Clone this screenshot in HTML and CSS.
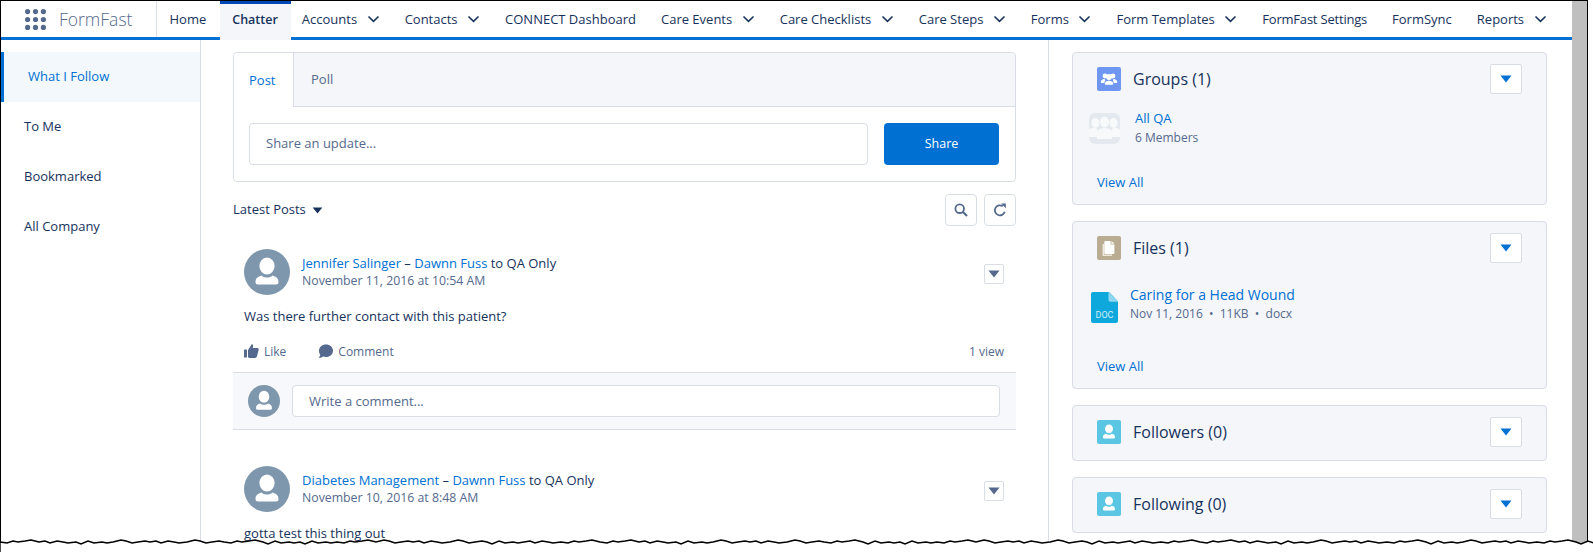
FILE: index.html
```html
<!DOCTYPE html>
<html>
    <head>
        <meta charset="utf-8">
        <title>FormFast - Chatter</title>
        <link rel="stylesheet" href="styles.css">
    </head>
    <body>
        <svg class="defs" width="0" height="0">
            <symbol id="person" viewBox="0 0 46 46">
                <ellipse cx="23" cy="17" rx="7.6" ry="8.6" fill="#fff"/>
                <path d="M11.5 33c0-4 2.5-5.5 6-6.500 1.5 1.5 3.3 2 5.500 2s4-.5 5.500-2c3.500 1 6 2.500 6 6.500 0 1.800-1 2.500-2.500 2.500H14c-1.500 0-2.500-.7-2.500-2.500z" fill="#fff"/>
            </symbol>
            <symbol id="chevron" viewBox="0 0 13 8">
                <path d="M1.5 1.5 6.500 6.300 11.500 1.500" fill="none" stroke="#16325c" stroke-width="1.6"/>
            </symbol>
            <symbol id="caret" viewBox="0 0 12 8">
                <path d="M.5.5h11L6 7.500z"/>
            </symbol>
        </svg>

        <div class="screen">
            <div class="app">
                <nav class="topbar">
                    <div class="brand">
                        <svg class="waffle" width="21" height="21" viewBox="0 0 21 21" fill="#54698d">
                            <circle cx="2.6" cy="2.6" r="2.6"/><circle cx="10.5" cy="2.6" r="2.6"/><circle cx="18.4" cy="2.6" r="2.6"/>
                            <circle cx="2.6" cy="10.5" r="2.6"/><circle cx="10.5" cy="10.5" r="2.6"/><circle cx="18.4" cy="10.5" r="2.6"/>
                            <circle cx="2.6" cy="18.4" r="2.6"/><circle cx="10.5" cy="18.4" r="2.6"/><circle cx="18.4" cy="18.4" r="2.6"/>
                        </svg>
                        <span class="brand-name">FormFast</span>
                    </div>
                    <a class="tab">Home</a>
                    <a class="tab tab-active">Chatter</a>
                    <a class="tab">Accounts <svg class="chev"><use href="#chevron"/></svg></a>
                    <a class="tab">Contacts <svg class="chev"><use href="#chevron"/></svg></a>
                    <a class="tab">CONNECT Dashboard</a>
                    <a class="tab">Care Events <svg class="chev"><use href="#chevron"/></svg></a>
                    <a class="tab">Care Checklists <svg class="chev"><use href="#chevron"/></svg></a>
                    <a class="tab">Care Steps <svg class="chev"><use href="#chevron"/></svg></a>
                    <a class="tab">Forms <svg class="chev"><use href="#chevron"/></svg></a>
                    <a class="tab">Form Templates <svg class="chev"><use href="#chevron"/></svg></a>
                    <a class="tab tab-tight">FormFast Settings</a>
                    <a class="tab">FormSync</a>
                    <a class="tab">Reports <svg class="chev"><use href="#chevron"/></svg></a>
                </nav>

                <div class="columns">
                    <aside class="sidebar">
                        <a class="side-item side-active">What I Follow</a>
                        <a class="side-item">To Me</a>
                        <a class="side-item">Bookmarked</a>
                        <a class="side-item">All Company</a>
                    </aside>

                    <main class="feed">
                        <section class="publisher">
                            <div class="pub-tabs">
                                <span class="pub-tab pub-tab-active">Post</span>
                                <span class="pub-tab">Poll</span>
                            </div>
                            <div class="pub-body">
                                <div class="fake-input">Share an update...</div>
                                <button class="share">Share</button>
                            </div>
                        </section>

                        <div class="feed-tools">
                            <span class="sort">Latest Posts <svg class="sort-caret"><use href="#caret"/></svg></span>
                            <div class="tool-btns">
                                <span class="tool-btn">
                                    <svg width="14" height="14" viewBox="0 0 14 14" fill="none" stroke="#54698d" stroke-width="1.8"><circle cx="5.7" cy="5.7" r="4.3"/><path d="M9 9l4 4" stroke-width="2.2"/></svg>
                                </span>
                                <span class="tool-btn">
                                    <svg width="14" height="14" viewBox="0 0 14 14" fill="none" stroke="#54698d" stroke-width="1.8"><path d="M11.7 8.700A5 5 0 1 1 9.800 3.300"/><path d="M8.200.6h4.600v4.600z" fill="#54698d" stroke="none"/></svg>
                                </span>
                            </div>
                        </div>

                        <article class="post">
                            <div class="post-head">
                                <svg class="avatar"><use href="#person"/></svg>
                                <div class="post-meta">
                                    <div class="post-title"><a>Jennifer Salinger</a> – <a>Dawnn Fuss</a> to QA Only</div>
                                    <div class="post-date">November 11, 2016 at 10:54 AM</div>
                                </div>
                                <span class="post-menu"><svg class="menu-caret"><use href="#caret"/></svg></span>
                            </div>
                            <p class="post-text">Was there further contact with this patient?</p>
                            <div class="post-actions">
                                <span class="action">
                                    <svg width="15" height="14" viewBox="0 0 15 14" fill="#54698d"><rect x="0" y="5.500" width="3" height="8" rx=".6"/><path d="M4 6 6.800 1.800C7.200.6 7.800 0 8.500.4c.9.5.8 1.800.2 3.600h4.400c1.400 0 1.900 1 1.500 2.100l-1.700 6.500c-.3.900-.9 1.400-1.800 1.400H6c-.9 0-2-.4-2-1.200z"/></svg>
                                    Like
                                </span>
                                <span class="action">
                                    <svg width="15" height="14" viewBox="0 0 15 14" fill="#54698d"><path d="M8 .5c3.900 0 7 2.700 7 6.200S11.900 13 8 13c-1 0-2-.2-2.900-.5C4 13.400 2.300 14 .6 13.800c1-.8 1.600-1.900 1.700-3C1.500 9.700 1 8.300 1 6.700 1 3.200 4.100.5 8 .5z"/></svg>
                                    Comment
                                </span>
                                <span class="views">1 view</span>
                            </div>
                            <div class="comment-box">
                                <svg class="avatar avatar-small"><use href="#person"/></svg>
                                <div class="comment-input">Write a comment...</div>
                            </div>
                        </article>

                        <article class="post post-next">
                            <div class="post-head">
                                <svg class="avatar"><use href="#person"/></svg>
                                <div class="post-meta">
                                    <div class="post-title"><a>Diabetes Management</a> – <a>Dawnn Fuss</a> to QA Only</div>
                                    <div class="post-date">November 10, 2016 at 8:48 AM</div>
                                </div>
                                <span class="post-menu"><svg class="menu-caret"><use href="#caret"/></svg></span>
                            </div>
                            <p class="post-text">gotta test this thing out</p>
                        </article>
                    </main>

                    <aside class="rail">
                        <section class="panel panel-groups">
                            <header class="panel-head">
                                <span class="panel-icon icon-groups">
                                    <svg width="20" height="20" viewBox="0 0 20 20" fill="#fff"><circle cx="6" cy="7" r="2.4"/><circle cx="14" cy="7" r="2.4"/><circle cx="10" cy="8" r="2.9"/><path d="M1.800 13c0-1.800 1.700-2.600 3.400-2.900l1 .6-.9 3.300H2.800c-.6 0-1-.4-1-1zM18.200 13c0-1.800-1.700-2.600-3.400-2.900l-1 .6.900 3.300h2.500c.6 0 1-.4 1-1zM5.800 14.700c0-2 1.800-3 4.200-3s4.200 1 4.200 3c0 .7-.4 1-1 1H6.800c-.6 0-1-.3-1-1z"/></svg>
                                </span>
                                <h2 class="panel-title">Groups (1)</h2>
                                <span class="panel-menu"><svg class="panel-caret"><use href="#caret"/></svg></span>
                            </header>
                            <div class="rail-item">
                                <span class="group-pic">
                                    <svg width="31" height="31" viewBox="0 0 31 31" fill="#f7f9fb"><ellipse cx="6.500" cy="10" rx="4" ry="5"/><ellipse cx="24.500" cy="10" rx="4" ry="5"/><ellipse cx="15.500" cy="9" rx="4.500" ry="5.500"/><path d="M0 16c2-1 4-1.500 6-1.500l2 1.500v8H0zM31 16c-2-1-4-1.500-6-1.500L23 16v8h8zM8 18c2-2 4.500-3 7.500-3s5.500 1 7.500 3v8H8z"/></svg>
                                </span>
                                <div class="item-text">
                                    <a class="item-link">All QA</a>
                                    <div class="item-sub">6 Members</div>
                                </div>
                            </div>
                            <a class="view-all">View All</a>
                        </section>

                        <section class="panel panel-files">
                            <header class="panel-head">
                                <span class="panel-icon icon-files">
                                    <svg width="18" height="20" viewBox="0 0 18 20"><path d="M2.500 6H4v10.500h8V18H3.500c-.6 0-1-.4-1-1z" fill="#eee8de"/><path d="M5.200 3h5.400v3.600h3.800V15c0 .5-.4.900-.9.900H5.200c-.5 0-.9-.4-.9-.9V3.900c0-.5.4-.9.900-.9zM11.500 3l2.900 2.800h-2.900z" fill="#fff"/></svg>
                                </span>
                                <h2 class="panel-title">Files (1)</h2>
                                <span class="panel-menu"><svg class="panel-caret"><use href="#caret"/></svg></span>
                            </header>
                            <div class="rail-item file-item">
                                <svg class="doc-icon" width="27" height="31" viewBox="0 0 27 31">
                                    <path d="M2 0h16l9 9.500V29c0 1.100-.9 2-2 2H2c-1.100 0-2-.9-2-2V2C0 .9.900 0 2 0z" fill="#0fa8dd"/>
                                    <path d="M17.500 0 27 9.800h-7.500c-1.100 0-2-.9-2-2z" fill="#8fd6ef"/>
                                    <text x="13.500" y="26" text-anchor="middle" class="doc-label">DOC</text>
                                </svg>
                                <div class="item-text">
                                    <a class="item-link file-link">Caring for a Head Wound</a>
                                    <div class="item-sub">Nov 11, 2016 &nbsp;•&nbsp; 11KB &nbsp;•&nbsp; docx</div>
                                </div>
                            </div>
                            <a class="view-all">View All</a>
                        </section>

                        <section class="panel">
                            <header class="panel-head">
                                <span class="panel-icon icon-people"><svg width="24" height="24"><use href="#person"/></svg></span>
                                <h2 class="panel-title">Followers (0)</h2>
                                <span class="panel-menu"><svg class="panel-caret"><use href="#caret"/></svg></span>
                            </header>
                        </section>

                        <section class="panel">
                            <header class="panel-head">
                                <span class="panel-icon icon-people"><svg width="24" height="24"><use href="#person"/></svg></span>
                                <h2 class="panel-title">Following (0)</h2>
                                <span class="panel-menu"><svg class="panel-caret"><use href="#caret"/></svg></span>
                            </header>
                        </section>
                    </aside>
                </div>
            </div>
            <div class="gutter"></div>
        </div>

        <!-- torn paper edge across the bottom of the capture -->
        <svg class="torn" width="1593" height="16" viewBox="0 0 1593 16">
            <path class="torn-edge" d="M0 6l7 1 6-2 5 1 7-1 6-1 8 2 6-1 5 2 7-2 6 1 5 1 8-1 5 2 7-3 6 2 8-1 5 1 6-1 8-2 5 1 6 2 6-1 7-1 5 1 6-1 5 2 7-2 6 1 5 1 8-1 8-2 5 1 6 2 6-1 7-1 5 1 7 1 6-2 5 1 7-1 6-1 8 2 5 2 7-3 6 2 8-1 5 1 6-1 5 2 7-3 6 2 8-1 5 1 6-1 7 1 6-2 5 1 7-1 6-1 8 2 8-2 5 1 6 2 6-1 7-1 5 1 6-1 5 2 7-2 6 1 5 1 8-1 8-2 5 1 6 2 6-1 7-1 5 1 5 2 7-3 6 2 8-1 5 1 6-1 6-1 5 2 7-2 6 1 5 1 8-1 7 1 6-2 5 1 7-1 6-1 8 2 7 1 6-2 5 1 7-1 6-1 8 2 6-1 5 2 7-2 6 1 5 1 8-1 5 2 7-3 6 2 8-1 5 1 6-1 8-2 5 1 6 2 6-1 7-1 5 1 6-1 5 2 7-2 6 1 5 1 8-1 8-2 5 1 6 2 6-1 7-1 5 1 7 1 6-2 5 1 7-1 6-1 8 2 5 2 7-3 6 2 8-1 5 1 6-1 5 2 7-3 6 2 8-1 5 1 6-1 7 1 6-2 5 1 7-1 6-1 8 2 8-2 5 1 6 2 6-1 7-1 5 1 6-1 5 2 7-2 6 1 5 1 8-1 8-2 5 1 6 2 6-1 7-1 5 1 5 2 7-3 6 2 8-1 5 1 6-1 6-1 5 2 7-2 6 1 5 1 8-1 7 1 6-2 5 1 7-1 6-1 8 2 7 1 6-2 5 1 7-1 6-1 8 2 6-1 5 2 7-2 6 1 5 1 8-1 5 2 7-3 6 2 8-1 5 1 6-1 8-2 5 1 6 2 6-1 7-1 5 1 6-1 5 2 7-2 6 1 5 1 8-1 7 1 6-2 5 1 7-1 6-1 8 2 5 2 7-3 6 2 8-1 5 1 6-1 8-2 5 1 6 2 6-1 7-1 5 1 6-1 5 2 7-2 6 1 5 1 8-1 7 1 6-2 5 1 7-1 6-1 8 2 5 2 7-3 6 2 8-1 5 1 6-1V20H0z"/>
        </svg>
    </body>
</html>
```

FILE: styles.css
```css
* {
    box-sizing: border-box;
}
html, body {
    margin: 0;
    height: 552px;
    overflow: hidden;
    background: white;
}
body {
    position: relative;
    font-family: "Open Sans", "Liberation Sans", sans-serif;
    font-size: 13px;
    color: #16325c;
}
a {
    color: #0070d2;
}
.defs {
    position: absolute;
}

.screen {
    display: flex;
    width: 1588px;
    height: 552px;
    border-top: 1px solid black;
    border-left: 1px solid black;
    border-right: 1px solid black;
}
.app {
    flex: 1;
    min-width: 0;
}
.gutter {
    width: 15px;
    background: #bfbfbf;
}

/* top nav */
.topbar {
    display: flex;
    height: 39px;
    border-bottom: 3px solid #0070d2;
}
.brand {
    display: flex;
    align-items: center;
    width: 156px;
    height: 36px;
    padding-left: 24px;
    border-right: 1px solid #d8dde6;
}
.brand-name {
    margin-left: 13px;
    font-size: 17.5px;
    font-weight: 300;
    color: #54698d;
}
.tab {
    display: flex;
    align-items: center;
    height: 36px;
    padding: 0 12.5px;
    color: #16325c;
    white-space: nowrap;
}
.tab-active {
    height: 39px;
    margin: 0 -2px 0 1px;
    padding: 0 13.5px 6px 12.5px;
    border-top: 3px solid #0047b3;
    background: #f4f6f9;
    font-weight: 600;
    font-size: 12.5px;
}
.tab-tight {
    letter-spacing: -.2px;
}
.chev {
    width: 13px;
    height: 8px;
    margin-left: 9.5px;
}

/* layout */
.columns {
    display: flex;
    height: 512px;
}
.sidebar {
    width: 200px;
    padding-top: 12px;
    border-right: 1px solid #d8dde6;
}
.side-item {
    display: flex;
    align-items: center;
    height: 50px;
    padding: 0 0 2px 23px;
    color: #16325c;
}
.side-active {
    padding-left: 24px;
    border-left: 3px solid #0070d2;
    background: #f3f8fc;
    color: #0070d2;
}

/* feed */
.feed {
    width: 848px;
    padding: 12px 32px 0 32px;
    border-right: 1px solid #d8dde6;
}
.publisher {
    height: 130px;
    border: 1px solid #d8dde6;
    border-radius: 4px;
}
.pub-tabs {
    display: flex;
    height: 54px;
    background: #f4f6f9;
    border-bottom: 1px solid #d8dde6;
    border-radius: 4px 4px 0 0;
}
.pub-tab {
    display: flex;
    align-items: center;
    padding: 0 17px 1px;
    color: #54698d;
}
.pub-tab-active {
    height: 54px;
    width: 60px;
    background: white;
    color: #0070d2;
    border-right: 1px solid #d8dde6;
    border-radius: 4px 0 0 0;
    padding: 0 15px 1px;
}
.pub-body {
    display: flex;
    gap: 16px;
    padding: 16px 16px 0 15px;
}
.fake-input {
    flex: 1;
    display: flex;
    align-items: center;
    height: 42px;
    padding: 0 0 2px 16px;
    border: 1px solid #d8dde6;
    border-radius: 4px;
    color: #54698d;
}
.share {
    width: 115px;
    height: 42px;
    padding-bottom: 2px;
    border: 0;
    border-radius: 4px;
    background: #0070d2;
    color: white;
    font: 400 12.5px "Open Sans", sans-serif;
}
.feed-tools {
    display: flex;
    align-items: center;
    justify-content: space-between;
    margin-top: 12px;
}
.sort {
    padding-bottom: 2px;
}
.sort-caret {
    width: 11px;
    height: 7px;
    margin-left: 3px;
    fill: #16325c;
}
.tool-btns {
    display: flex;
    gap: 7px;
}
.tool-btn {
    display: flex;
    align-items: center;
    justify-content: center;
    width: 32px;
    height: 32px;
    border: 1px solid #d8dde6;
    border-radius: 4px;
}

/* posts */
.post {
    padding-top: 23px;
}
.post-next {
    padding-top: 36px;
}
.post-head {
    display: flex;
    height: 47px;
    margin: 0 12px 0 11px;
}
.avatar {
    width: 46px;
    height: 46px;
    border-radius: 50%;
    background: #7f97ad;
    flex: none;
}
.avatar-small {
    width: 32px;
    height: 32px;
}
.post-meta {
    flex: 1;
    padding: 5px 0 0 12px;
}
.post-title {
    line-height: 18px;
}
.post-date {
    line-height: 18px;
    font-size: 12.3px;
    color: #54698d;
}
.post-menu {
    display: flex;
    align-items: center;
    justify-content: center;
    width: 20px;
    height: 20px;
    margin-top: 15px;
    border: 1px solid #d8dde6;
    border-radius: 2px;
}
.menu-caret {
    width: 12px;
    height: 8px;
    fill: #54698d;
}
.post-text {
    margin: 10px 12px 0 11px;
    line-height: 20px;
}
.post-actions {
    display: flex;
    align-items: center;
    height: 20px;
    margin: 15px 12px 0 11px;
    font-size: 12px;
    color: #54698d;
}
.action {
    display: flex;
    align-items: center;
    gap: 5px;
    margin: 0 32px 0 0;
}
.views {
    margin-left: auto;
}
.comment-box {
    display: flex;
    align-items: center;
    gap: 12px;
    height: 58px;
    margin-top: 11px;
    padding: 0 16px 0 15px;
    background: #f7f8fb;
    border-top: 1px solid #d8dde6;
    border-bottom: 1px solid #d8dde6;
}
.comment-input {
    flex: 1;
    display: flex;
    align-items: center;
    height: 32px;
    padding: 0 0 1px 16px;
    background: white;
    border: 1px solid #d8dde6;
    border-radius: 4px;
    color: #54698d;
}

/* right rail */
.rail {
    flex: 1;
    display: flex;
    flex-direction: column;
    gap: 16px;
    padding: 12px 25px 0 23px;
}
.panel {
    height: 56px;
    background: #f4f6f9;
    border: 1px solid #d8dde6;
    border-radius: 4px;
    padding: 0 24px 0 24px;
}
.panel-groups {
    height: 153px;
}
.panel-files {
    height: 168px;
}
.panel-head {
    display: flex;
    align-items: center;
    height: 52px;
}
.panel-icon {
    display: flex;
    align-items: center;
    justify-content: center;
    width: 24px;
    height: 24px;
    border-radius: 2px;
}
.icon-groups {
    background: #6f96f0;
}
.icon-files {
    background: #baac93;
}
.icon-people {
    background: #5bc5e4;
}
.panel-title {
    flex: 1;
    margin: 0 0 0 12px;
    font-size: 16px;
    font-weight: 400;
}
.panel-menu {
    display: flex;
    align-items: center;
    justify-content: center;
    width: 32px;
    height: 30px;
    background: white;
    border: 1px solid #d8dde6;
    border-radius: 2px;
}
.panel-caret {
    width: 12px;
    height: 8px;
    fill: #0070d2;
}
.rail-item {
    display: flex;
    align-items: center;
    gap: 15px;
    margin-left: -8px;
    margin-top: 4px;
}
.group-pic {
    width: 31px;
    height: 31px;
    overflow: hidden;
    background: #e3e9ef;
    border-radius: 6px;
}
.group-pic svg {
    display: block;
}
.item-link {
    display: block;
    line-height: 19px;
}
.file-link {
    font-size: 14px;
}
.item-sub {
    line-height: 19px;
    font-size: 12px;
    color: #54698d;
}
.file-item {
    gap: 12px;
    margin-top: 10px;
    margin-left: -6px;
}
.doc-icon {
    margin-top: 8px;
}
.doc-label {
    font: 9px "Roboto", sans-serif;
    fill: #cdeefa;
}
.view-all {
    display: block;
    margin-top: 25px;
    line-height: 20px;
}
.file-item + .view-all {
    margin-top: 33px;
}

/* torn edge sits on top of everything */
.torn {
    position: absolute;
    left: 0;
    bottom: 0;
    filter: drop-shadow(1px 2px 1px #777);
}
.torn-edge {
    fill: white;
    stroke: black;
    stroke-width: 1.4;
}
```
